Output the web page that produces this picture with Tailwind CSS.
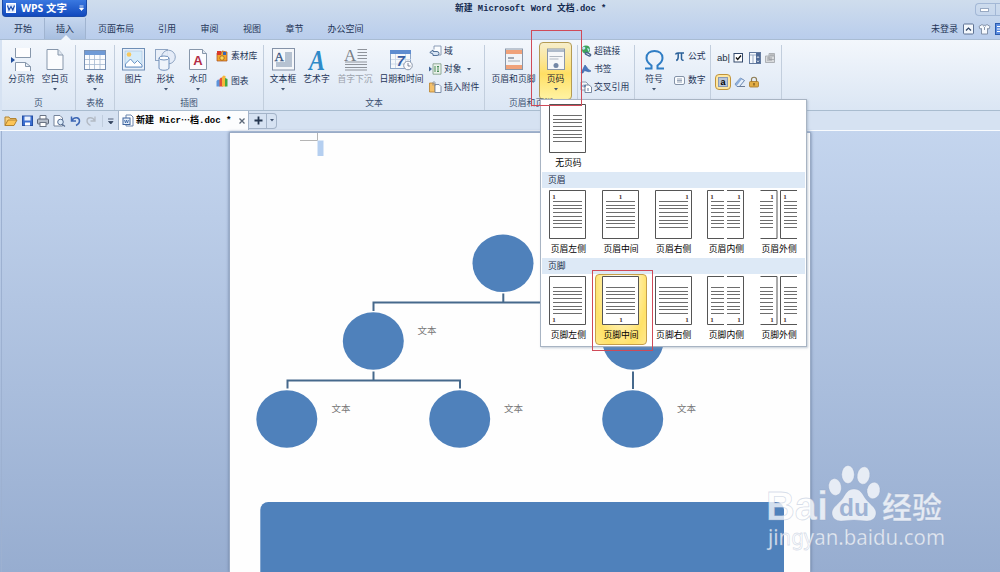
<!DOCTYPE html>
<html lang="zh-CN">

<head>
    <meta charset="UTF-8">
    <meta name="viewport" content="width=device-width, initial-scale=1.0">
    <title>WPS 文字</title>
    <script src="https://cdn.jsdelivr.net/npm/@tailwindcss/browser@4"></script>
</head>

<body class="w-[1000px] h-[572px] overflow-hidden relative flex flex-col bg-[#d6e2f2] font-['Liberation_Sans','Noto_Sans_CJK_SC',sans-serif] text-[8.8px] leading-[12px] text-[#1f3557] whitespace-nowrap">

    <!-- title bar + menu tabs -->
    <header class="h-[40px] shrink-0 flex flex-col bg-gradient-to-b from-[#cfdded] to-[#b9cdec] border-b border-[#a9bcd3]">
        <div class="h-[18px] flex justify-between">
            <div class="ml-[2px] w-[85px] h-[17px] rounded-b-sm bg-gradient-to-b from-[#3a78e0] to-[#1249bd] border border-t-0 border-[#1a4aa8] flex items-center text-white">
                <svg class="ml-[3px]" width="10" height="10" viewBox="0 0 10 10">
                    <rect x=".5" y=".5" width="9" height="9" fill="#dfeaff" stroke="#fff" />
                    <path d="M1.500 2.500l1.500 4.500 2-3.500 1.800 3.500L8.500 2.500" fill="none" stroke="#1d4eae" stroke-width="1.200" />
                </svg>
                <span class="ml-[5px] w-[58px] text-[10.4px] font-bold font-['Open_Sans','Noto_Sans_CJK_SC',sans-serif]">WPS 文字</span>
                <svg width="5" height="6" viewBox="0 0 5 6"><path d="M.5 1h4M.5 3h4L2.500 5.500z" stroke="#fff" stroke-width=".8" fill="#fff" /></svg>
            </div>
            <div class="flex w-[545px] justify-between">
                <span class="pt-[3px] text-[8.8px] font-bold text-[#13294f] font-['Liberation_Mono','Noto_Sans_CJK_SC',monospace]">新建 Microsoft Word 文档.doc *</span>
                <div class="mt-[3px] w-[25px] h-[13px] border border-r-0 border-[#a3b8d6] rounded-l-sm flex items-center justify-center">
                    <span class="w-[9px] h-[4px] border border-[#98a9c2] bg-white"></span>
                    <span class="ml-[6px] h-[11px] border-l border-[#a3b8d6]"></span>
                </div>
            </div>
        </div>
        <nav class="h-[21px] flex text-[9px] pl-[2px]">
            <span class="w-[42px] flex items-center justify-center">开始</span>
            <span class="w-[42px] flex items-center justify-center relative border-x border-[#a0b4d0] bg-gradient-to-b from-[#c5d6ee] to-[#a8bfe0]">插入
                <svg class="absolute bottom-[-1px] left-[16px]" width="10" height="5" viewBox="0 0 10 5"><path d="M0 5L5 0l5 5z" fill="#f1f6fc" /></svg>
            </span>
            <span class="w-[60px] flex items-center justify-center">页面布局</span>
            <span class="w-[42px] flex items-center justify-center">引用</span>
            <span class="w-[43px] flex items-center justify-center">审阅</span>
            <span class="w-[42px] flex items-center justify-center">视图</span>
            <span class="w-[43px] flex items-center justify-center">章节</span>
            <span class="w-[59px] flex items-center justify-center">办公空间</span>
            <span class="ml-auto flex items-center">
                <span class="w-[32px]">未登录</span>
                <svg width="37" height="12" viewBox="0 0 37 12">
                    <rect x=".5" y="1" width="10" height="10" rx="1" fill="#f3f7fc" stroke="#5f7394" />
                    <path d="M3 7.500L5.500 5 8 7.500" fill="none" stroke="#2a4062" stroke-width="1.200" />
                    <path d="M19 1.500l-3 2 1 2.500 1.500-.5v5.500h6v-5.500l1.500.5 1-2.500-3-2-1 .8h-3zM20.500 3.500l1 1 1-1M21.500 4.500v2.500" fill="#f6f9fd" stroke="#6e7f98" stroke-width=".8" />
                    <rect x="32.500" y="0.500" width="12" height="11" fill="#5b8ce0" stroke="#2c5cae" />
                    <path d="M34 3.500h4M34 6h4M34 8.500h4" stroke="#fff" />
                </svg>
            </span>
        </nav>
    </header>

    <!-- ribbon -->
    <section class="h-[71px] shrink-0 ml-[2px] flex pt-[5px] bg-gradient-to-b from-[#f3f7fc] to-[#dbe6f4] border-b border-[#a9bccf]">
        <div class="w-[74px] flex flex-col border-r border-[#c2cedd]">
            <div class="h-[52px] flex pl-[1px]">
                <div class="w-[37px] flex flex-col items-center pt-[3px]">
                    <svg width="23" height="23" viewBox="0 0 23 23">
                        <path d="M5.500 0v9.500h15V0" fill="#fdfdfe" stroke="#8797ab" />
                        <path d="M5.500 23v-8.500h10l5 4V23M15.500 14.500v4h5" fill="#fdfdfe" stroke="#8797ab" />
                        <path d="M1 9l4 3-4 3z" fill="#23509e" />
                    </svg>
                    <span class="mt-[2px]">分页符</span>
                </div>
                <div class="w-[30px] flex flex-col items-center pt-[3px]">
                    <svg width="18" height="23" viewBox="0 0 18 23">
                        <path d="M1 1.500h11l5 5.500v14.500H1z" fill="#fbfcfe" stroke="#8797ab" />
                        <path d="M12 1.500V7h5" fill="#dfe6ef" stroke="#8797ab" />
                    </svg>
                    <span class="mt-[2px]">空白页</span>
                    <svg class="mt-[3px]" width="4" height="3"><path d="M0 0h4L2 2.500z" fill="#41536f" /></svg>
                </div>
            </div>
            <span class="text-center text-[#3c5172]">页</span>
        </div>
        <div class="w-[39px] flex flex-col border-r border-[#c2cedd]">
            <div class="h-[52px] flex flex-col items-center pt-[3px]">
                <svg width="22" height="23" viewBox="0 0 22 23">
                    <rect x=".5" y="2.500" width="21" height="19" fill="#fbfcfe" stroke="#7890b3" />
                    <rect x="1" y="3" width="20" height="4" fill="#6f9ad6" />
                    <path d="M1 11.500h20M1 16.500h20M5.500 7v14M10.500 7v14M16 7v14" stroke="#a5b7d0" stroke-width=".8" />
                </svg>
                <span class="mt-[2px]">表格</span>
                <svg class="mt-[3px]" width="4" height="3"><path d="M0 0h4L2 2.500z" fill="#41536f" /></svg>
            </div>
            <span class="text-center text-[#3c5172]">表格</span>
        </div>
        <div class="w-[149px] flex flex-col border-r border-[#c2cedd]">
            <div class="h-[52px] flex pl-[3px]">
                <div class="w-[31px] flex flex-col items-center pt-[3px]">
                    <svg width="23" height="23" viewBox="0 0 23 23">
                        <rect x=".5" y=".5" width="22" height="21.500" fill="#e8f0fa" stroke="#6e8eb6" />
                        <rect x="3" y="3" width="17" height="16.500" fill="#d5ebfa" stroke="#a5bfdc" stroke-width=".6" />
                        <circle cx="7" cy="6.500" r="2.300" fill="#f8c75c" />
                        <path d="M3.500 16l5-5 4 4.500 3-3 4.500 4.500v2H3.500z" fill="#fff" stroke="#6b93c4" />
                    </svg>
                    <span class="mt-[2px]">图片</span>
                </div>
                <div class="w-[33px] flex flex-col items-center pt-[3px]">
                    <svg width="21" height="23" viewBox="0 0 21 23">
                        <rect x=".5" y="1.500" width="12" height="11" fill="#e9eff8" stroke="#8fa5c3" />
                        <circle cx="13.500" cy="9" r="6.800" fill="#e3ebf7" fill-opacity=".9" stroke="#8fa5c3" />
                        <path d="M4 10v10c0 3 10 3 10 0V10" fill="#eef3fa" stroke="#6f8fbb" />
                        <ellipse cx="9" cy="10" rx="5" ry="2" fill="#fff" stroke="#6f8fbb" />
                    </svg>
                    <span class="mt-[2px]">形状</span>
                    <svg class="mt-[3px]" width="4" height="3"><path d="M0 0h4L2 2.500z" fill="#41536f" /></svg>
                </div>
                <div class="w-[32px] flex flex-col items-center pt-[3px]">
                    <svg width="18" height="23" viewBox="0 0 18 23">
                        <path d="M.5 1.500h13l4 4v16H.5z" fill="#fbfcfe" stroke="#8797ab" />
                        <path d="M13.500 1.500v4h4" fill="#dfe6ef" stroke="#8797ab" />
                        <text x="9" y="17" text-anchor="middle" font-size="13" font-weight="bold" fill="#b32d45">A</text>
                    </svg>
                    <span class="mt-[2px]">水印</span>
                    <svg class="mt-[3px]" width="4" height="3"><path d="M0 0h4L2 2.500z" fill="#41536f" /></svg>
                </div>
                <div class="flex flex-col gap-[13px] pt-[5px] pl-[2px]">
                    <div class="flex items-center gap-[3px]">
                        <svg width="12" height="12" viewBox="0 0 12 12">
                            <path d="M1 3l4 1 1-3 5 1v9H1z" fill="#f2a52c" stroke="#a84a1c" stroke-width=".7" />
                            <rect x="1" y="1" width="4" height="4" fill="#d93a2b" />
                            <rect x="7" y="2" width="3" height="3" fill="#3565b8" />
                            <circle cx="6" cy="8" r="2.200" fill="#ffd75a" stroke="#7e4716" stroke-width=".6" />
                        </svg>
                        <span>素材库</span>
                    </div>
                    <div class="flex items-center gap-[3px]">
                        <svg width="12" height="12" viewBox="0 0 12 12">
                            <path d="M.5 6l1.500-1.500 2 .5v6.500H.5z" fill="#5b93dc" />
                            <path d="M3.500 4l1.500-1.500 2 .5v8.500H3.500z" fill="#e2523a" />
                            <path d="M6 2l1.500-1.500 2 .5v10.500H6z" fill="#f5b83a" />
                            <path d="M9 3l2.500 1v7.500H9z" fill="#46a83f" />
                        </svg>
                        <span>图表</span>
                    </div>
                </div>
            </div>
            <span class="text-center text-[#3c5172]">插图</span>
        </div>
        <div class="w-[221px] flex flex-col border-r border-[#c2cedd]">
            <div class="h-[52px] flex pl-[3px]">
                <div class="w-[32px] flex flex-col items-center pt-[3px]">
                    <svg width="23" height="23" viewBox="0 0 23 23">
                        <rect x=".5" y=".5" width="22" height="21.500" fill="#f5f7fa" stroke="#8492a8" />
                        <path d="M13 4h7v15H4v-5h9z" fill="#b6c2d1" />
                        <text x="2.500" y="12.500" font-size="13" font-family="Liberation Serif" fill="#33517c" stroke="#33517c" stroke-width=".3">A</text>
                    </svg>
                    <span class="mt-[2px]">文本框</span>
                    <svg class="mt-[3px]" width="4" height="3"><path d="M0 0h4L2 2.500z" fill="#41536f" /></svg>
                </div>
                <div class="w-[35px] flex flex-col items-center pt-[3px]">
                    <svg width="20" height="23" viewBox="0 0 20 23">
                        <text x="2" y="21.500" font-size="29" font-style="italic" font-weight="bold" font-family="Liberation Serif" textLength="16" lengthAdjust="spacingAndGlyphs" fill="#2e8ac8">A</text>
                    </svg>
                    <span class="mt-[2px]">艺术字</span>
                </div>
                <div class="w-[42px] flex flex-col items-center pt-[3px] text-[#9aa1ab]">
                    <svg width="23" height="23" viewBox="0 0 23 23">
                        <path d="M13.500 1.500H23M13.500 4.500H23M13.500 7.500H23M13.500 10.500H23M1 14h22M1 16.500h22M1 19.500h22M1 22h22" stroke="#8f949b" />
                        <text x="0" y="12.500" font-size="17" font-family="Liberation Serif" fill="#777d85">A</text>
                    </svg>
                    <span class="mt-[2px]">首字下沉</span>
                </div>
                <div class="w-[51px] flex flex-col items-center pt-[3px]">
                    <svg width="23" height="23" viewBox="0 0 23 23">
                        <rect x=".5" y="2.500" width="20" height="18" fill="#f5f8fc" stroke="#8da6c8" />
                        <rect x="0" y="2" width="21" height="4" fill="#5e8cd0" />
                        <path d="M1 11.500h20M1 16h20M5.500 6v14M15.500 6v14" stroke="#c7d3e4" stroke-width=".8" />
                        <text x="6.500" y="18" font-size="15" font-weight="bold" font-style="italic" fill="#375da2">7</text>
                        <circle cx="18" cy="17.500" r="4.300" fill="#fafbfd" stroke="#8b98ab" />
                        <path d="M18 15v3h2.500" fill="none" stroke="#5d6b80" stroke-width=".8" />
                    </svg>
                    <span class="mt-[2px]">日期和时间</span>
                </div>
                <div class="flex flex-col gap-[6px] pl-[2px]">
                    <div class="flex items-center gap-[2px]">
                        <svg width="13" height="12" viewBox="0 0 13 12">
                            <path d="M5 4.500V1h7v9H9" fill="#fafcfe" stroke="#7f92ae" stroke-width=".9" />
                            <path d="M.8 7.500L4 5v1.500h4a2 2 0 010 4H4V9z" fill="#d7e4f4" stroke="#44658f" stroke-width=".9" />
                        </svg>
                        <span>域</span>
                    </div>
                    <div class="flex items-center gap-[2px]">
                        <svg width="13" height="12" viewBox="0 0 13 12">
                            <path d="M4 .8h8v10.400H4z" fill="#eaf2ea" stroke="#7c9a83" stroke-width=".8" />
                            <path d="M6 3v6M8 3.500h2M8 8.500h2M9 3.500v5" stroke="#4b8c58" />
                            <path d="M0 3.500l3 2.500-3 2.500z" fill="#44679a" />
                        </svg>
                        <span>对象</span>
                        <svg class="ml-[3px]" width="4" height="3"><path d="M0 0h4L2 2.500z" fill="#41536f" /></svg>
                    </div>
                    <div class="flex items-center gap-[2px]">
                        <svg width="13" height="12" viewBox="0 0 13 12">
                            <path d="M.5 2h4l1.500 1.500V11H.5z" fill="#f4c069" stroke="#ba812b" stroke-width=".8" />
                            <path d="M6 3.500h4l2 2v6H6z" fill="#fafcfe" stroke="#6f83a2" stroke-width=".9" />
                            <path d="M4 4.500V1.500c0-1 2-1 2 0V5" fill="none" stroke="#7d8796" stroke-width=".8" />
                        </svg>
                        <span>插入附件</span>
                    </div>
                </div>
            </div>
            <span class="text-center text-[#3c5172]">文本</span>
        </div>
        <div class="w-[93px] flex flex-col border-r border-[#c2cedd]">
            <div class="h-[52px] flex">
                <div class="w-[54px] shrink-0 pl-[3px] flex flex-col items-center pt-[3px]">
                    <svg width="18" height="23" viewBox="0 0 18 23">
                        <rect x=".5" y="1" width="17" height="20.500" fill="#f2f4f7" stroke="#8a97a9" />
                        <rect x="1" y="2" width="16" height="4" fill="#f0a27a" />
                        <rect x="1" y="17" width="16" height="4" fill="#f0a27a" />
                        <path d="M3 10h6" stroke="#4d5c72" />
                        <path d="M3 13h12" stroke="#a4adb9" />
                    </svg>
                    <span class="mt-[2px]">页眉和页脚</span>
                </div>
                <div class="mt-[-3px] w-[33px] h-[58px] shrink-0 rounded-sm border border-[#b49b54] bg-gradient-to-b from-[#f7eecb] via-[#ffdf63] via-55% to-[#fff3a2] flex flex-col items-center pt-[5px] text-[#1b2430]">
                    <svg width="18" height="23" viewBox="0 0 18 23">
                        <rect x=".5" y="1" width="17" height="20.500" fill="#f6f7f9" stroke="#8a97a9" />
                        <path d="M1 1.500h16V4H1z" fill="#aebaca" />
                        <path d="M2.500 8.500h13M2.500 11h9" stroke="#b0b7c1" />
                        <circle cx="9" cy="17.500" r="2.500" fill="#7387a6" />
                    </svg>
                    <span class="mt-[2px]">页码</span>
                    <svg class="mt-[3px]" width="4" height="3"><path d="M0 0h4L2 2.500z" fill="#41536f" /></svg>
                </div>
            </div>
            <span class="text-center text-[#3c5172]">页眉和页脚</span>
        </div>
        <div class="w-[57px] flex flex-col gap-[6px] border-r border-[#c2cedd] pl-[2px]">
            <div class="flex items-center gap-[2px]">
                <svg width="12" height="12" viewBox="0 0 12 12">
                    <circle cx="6" cy="4.500" r="4" fill="#3fa35b" />
                    <path d="M3 2c2-1 3 1 2 2s-2 1-3 0M7 3l2.500 1-1 3" fill="#bfe3f5" />
                    <path d="M6.500 8.500l3 1.500" stroke="#48628d" stroke-width="3.500" stroke-linecap="round" />
                    <path d="M6.500 8.500l3 1.500" stroke="#dce6f4" />
                </svg>
                <span>超链接</span>
            </div>
            <div class="flex items-center gap-[2px]">
                <svg width="12" height="12" viewBox="0 0 12 12"><path d="M1 10L5 2c2 2 3 5 6 6-3 2-5-1-7 0l-1 2z" fill="#4a78c0" stroke="#31599c" stroke-width=".6" /></svg>
                <span>书签</span>
            </div>
            <div class="flex items-center gap-[2px]">
                <svg width="12" height="12" viewBox="0 0 12 12">
                    <path d="M1 1h5l2 2v6H1z" fill="#f4f7fb" stroke="#77879f" stroke-width=".8" />
                    <path d="M5 4h4l2.500 2v5.500H5z" fill="#fff" stroke="#5d6f8c" stroke-width=".8" />
                    <path d="M2 5h3.500L4 3.500M5.500 5L4 6.500M8 7v3" fill="none" stroke="#3d5e92" stroke-width=".8" />
                </svg>
                <span>交叉引用</span>
            </div>
        </div>
        <div class="w-[76px] flex border-r border-[#c2cedd] pl-[3px]">
            <div class="w-[32px] flex flex-col items-center pt-[3px]">
                <svg width="23" height="23" viewBox="0 0 23 23"><path d="M2 20.500h6.500v-3C5.500 15.500 3.500 13 3.500 10c0-4.500 3.500-7 8-7s8 2.500 8 7c0 3-2 5.500-5 7.500v3H21" fill="none" stroke="#2f7dc4" stroke-width="2" /></svg>
                <span class="mt-[2px]">符号</span>
                <svg class="mt-[3px]" width="4" height="3"><path d="M0 0h4L2 2.500z" fill="#41536f" /></svg>
            </div>
            <div class="flex flex-col gap-[12px] pt-[5px] pl-[4px]">
                <div class="flex items-center gap-[3px]">
                    <svg width="11" height="11" viewBox="0 0 11 11"><path d="M1.500 3.500C2 2 3 2 4 2h6M4.200 2v4c0 2-.5 3-2 3.500M7.500 2v5.500c0 1.500 1 2 2 1.500" fill="none" stroke="#2a6099" stroke-width="1.500" /></svg>
                    <span>公式</span>
                </div>
                <div class="flex items-center gap-[3px]">
                    <svg width="11" height="11" viewBox="0 0 11 11">
                        <rect x=".5" y="1.500" width="10" height="8" rx="1.500" fill="#fafcfe" stroke="#8493a8" />
                        <path d="M3 4h5M3 5.500h5M3 7h5" stroke="#6d7f9a" stroke-width=".7" />
                    </svg>
                    <span>数字</span>
                </div>
            </div>
        </div>
        <div class="w-[71px] flex flex-col border-r border-[#c2cedd] pl-[4px] pt-[5px]">
            <div class="h-[16px] flex items-center">
                <span class="w-[18px] shrink-0 pl-[2px] text-[9.5px] text-[#222f42]">ab|</span>
                <svg class="shrink-0" width="42" height="14" viewBox="0 0 42 14">
                    <rect x="1" y="2.500" width="8.500" height="8.500" fill="#fff" stroke="#33496b" />
                    <path d="M3 6.500l1.700 2L8 4.500" fill="none" stroke="#111" stroke-width="1.300" />
                    <rect x="16.500" y="1.500" width="11" height="11" fill="#f6f9fd" stroke="#647b9f" />
                    <path d="M17 4h6M20 4v8" stroke="#9aabc4" />
                    <path d="M23 2h4v10h-4z" fill="#4f6a96" />
                    <path d="M24 7l1-1.500L26 7M24 9.500l1 1.500 1-1.500" fill="none" stroke="#fff" stroke-width=".7" />
                    <path d="M32.500 5h9v6.500h-9zM36 2.500h5.500v6h-5.500z" fill="#d9dbdd" stroke="#a0a3a8" stroke-width=".8" />
                    <path d="M34 7h5M34 9h5M37 4h4" stroke="#8f9297" stroke-width=".8" />
                </svg>
            </div>
            <div class="mt-[8px] h-[16px] flex items-center">
                <span class="w-[16px] h-[16px] shrink-0 rounded-sm border border-[#c0933a] bg-[#ffe7a0] flex items-center justify-center">
                    <span class="w-[10px] h-[10px] border border-[#8899b5] bg-[#b8c5dc] flex items-center justify-center text-[9px] leading-[8px] font-bold text-black">a</span>
                </span>
                <svg class="ml-[3px]" width="12" height="12" viewBox="0 0 12 12">
                    <path d="M1 8l5.500-6 4 2.500L5.500 10.500H3z" fill="#e6effa" stroke="#5b7ba8" stroke-width=".9" />
                    <path d="M1 8l5.500-6 1.500 1L3 9.500z" fill="#8fb0dc" />
                    <path d="M5 10.500h6" stroke="#6c7c95" />
                </svg>
                <svg class="ml-[3px]" width="10" height="12" viewBox="0 0 10 12">
                    <path d="M2.500 6V3.500c0-3 5-3 5 0V6" fill="none" stroke="#8e7d54" stroke-width="1.200" />
                    <rect x=".5" y="5.500" width="9" height="5.500" rx="1" fill="#e2ad45" stroke="#a5762a" stroke-width=".8" />
                    <path d="M5 7v2.500" stroke="#5d3d10" />
                </svg>
            </div>
        </div>
    </section>

    <!-- quick access + document tabs -->
    <section class="h-[19px] shrink-0 ml-[2px] flex items-center">
        <svg class="ml-[2px] shrink-0" width="112" height="14" viewBox="0 0 112 14">
            <path d="M1 11.500V3h4l1 1.500h6V6" fill="#f7d080" stroke="#b48430" />
            <path d="M1 11.500L4 6h9l-3 5.500z" fill="#fcc558" stroke="#b48430" />
            <rect x="18.500" y="2" width="10" height="9.500" fill="#3c6fd0" stroke="#2450a5" />
            <rect x="20.500" y="2.500" width="6" height="4" fill="#e9f1fd" />
            <rect x="21" y="8.500" width="5" height="3" fill="#fff" />
            <path d="M36 5V1.500h6V5" fill="#fff" stroke="#6a7485" />
            <rect x="33.500" y="5" width="11" height="5" rx="1" fill="#b5bdc9" stroke="#5d6778" />
            <rect x="36" y="8.500" width="6" height="4" fill="#fff" stroke="#6a7485" />
            <path d="M50 1.500h6l2.500 2.500v8H50z" fill="#fff" stroke="#75839a" />
            <circle cx="56.500" cy="8" r="2.800" fill="#dcebfa" stroke="#566e93" />
            <path d="M58.500 10.500l2.500 2" stroke="#566e93" stroke-width="1.300" />
            <path d="M67.500 2.500V7H72M68 6.500c2-4 7.500-3.500 7.500.5 0 2-1.500 3.500-3.500 4.500" fill="none" stroke="#3c66b4" stroke-width="1.500" />
            <path d="M91 2.500V7h-4.500M90.500 6.500c-2-4-7.500-3.500-7.500.5 0 2 1.500 3.500 3.500 4.500" fill="none" stroke="#b3bac4" stroke-width="1.300" />
            <path d="M98.500 1v12" stroke="#c0cddd" />
            <path d="M104 5h5.500M104.500 7.500h4.500L106.800 10z" fill="#33435d" stroke="#33435d" stroke-width=".8" />
        </svg>
        <div class="ml-[2px] w-[131px] h-[19px] flex items-center border-x border-[#a4b4c9] bg-[#fcfdfe] text-black">
            <svg class="ml-[3px] shrink-0" width="12" height="13" viewBox="0 0 12 13">
                <path d="M4 1h5l2 2v9H4z" fill="#fff" stroke="#6a85ad" />
                <rect x="1" y="4" width="7" height="6.500" fill="#e7f0fb" stroke="#3f659e" />
                <path d="M2.500 6l1 3 1-3 1 3 1-3" fill="none" stroke="#355f9f" stroke-width=".8" />
            </svg>
            <span class="ml-[2px] w-[103px] shrink-0 text-[9px] font-bold font-['Liberation_Mono','Noto_Sans_CJK_SC',monospace]">新建 Micr<span class="font-['Noto_Sans_CJK_SC']">…</span>档.doc *</span>
            <svg class="shrink-0" width="6" height="6" viewBox="0 0 6 6"><path d="M.5.500l5 5M5.500.500l-5 5" stroke="#5d6979" stroke-width="1.300" /></svg>
        </div>
        <div class="w-[28px] h-[16px] flex items-center border border-l-0 border-[#a4b4c9] rounded-r-sm">
            <svg class="ml-[5px]" width="9" height="9" viewBox="0 0 9 9"><path d="M4.500.500v8M.5 4.500h8" stroke="#24364f" stroke-width="1.800" /></svg>
            <span class="ml-[3px] h-[14px] border-l border-[#a4b4c9]"></span>
            <svg class="ml-[3px]" width="4" height="3"><path d="M0 0h4L2 2.500z" fill="#41536f" /></svg>
        </div>
    </section>

    <!-- document area -->
    <main class="h-[442px] shrink-0 flex justify-start border-t border-[#f8fbfe] bg-gradient-to-b from-[#c4d5ee] to-[#97add0]">
        <div class="w-[2px] border-r border-[#9db1d1]"></div>
        <div class="ml-[227px] mt-[1px] w-[582px] bg-[#fefefe] border-t border-x border-[#9aabc6] shadow-[0_0_3px_#6b7f9f]">
            <svg width="580" height="440" viewBox="230 133 580 440">
                <path d="M300 140.500h17.500V132" fill="none" stroke="#b5b5b5" />
                <rect x="317.500" y="140.500" width="6" height="15.500" fill="#b5cff0" />
                <g fill="none" stroke="#46698c" stroke-width="2">
                    <path d="M503.300 293.500V302M373.500 311v-8.500H633V311" />
                    <path d="M373.500 371.500v9M287.500 388.500v-8h172.500v8" />
                    <path d="M633 371.500V389" />
                </g>
                <g fill="#4f81bb">
                    <ellipse cx="503" cy="263.300" rx="30.500" ry="28.800" />
                    <ellipse cx="373.300" cy="341" rx="30.500" ry="28.800" />
                    <ellipse cx="633" cy="341" rx="30.500" ry="28.800" />
                    <ellipse cx="286.800" cy="419" rx="30.500" ry="28.800" />
                    <ellipse cx="459.700" cy="419" rx="30.500" ry="28.800" />
                    <ellipse cx="632.700" cy="419" rx="30.500" ry="28.800" />
                    <rect x="260.300" y="502" width="523.700" height="90" rx="8" />
                </g>
                <g font-size="9.5" fill="#777">
                    <text x="417.500" y="334">文本</text>
                    <text x="331.500" y="412">文本</text>
                    <text x="504" y="412">文本</text>
                    <text x="677" y="412">文本</text>
                </g>
            </svg>
        </div>
    </main>

    <!-- page number gallery -->
    <div class="absolute left-[540px] top-[99px] w-[267px] h-[248px] bg-white border border-[#a8b4c3] shadow-[1px_1px_2px_#8c9bb080] text-black flex flex-col px-[1px]">
        <div id="noneRow" class="h-[72px] flex pt-[2px]"></div>
        <div class="h-[16px] shrink-0 bg-[#dde9f6] flex items-center pl-[6px] text-[#1b2c48]">页眉</div>
        <div id="headerRow" class="h-[70px] flex"></div>
        <div class="h-[16px] shrink-0 bg-[#dde9f6] flex items-center pl-[6px] text-[#1b2c48]">页脚</div>
        <div id="footerRow" class="h-[71px] flex"></div>
    </div>

    <!-- highlight frames -->
    <div class="absolute left-[531px] top-[30px] w-[51px] h-[76px] border border-[#cf4a58]"></div>
    <div class="absolute left-[592px] top-[270px] w-[61px] h-[81px] border border-[#cf4a58]"></div>

    <!-- watermark -->
    <svg class="absolute left-[760px] top-[460px]" width="200" height="95" viewBox="760 460 200 95">
        <g fill="#fff" fill-opacity=".75" stroke="#8ea2c4" stroke-opacity=".35" stroke-width=".8">
            <text x="766" y="520" font-size="40" font-weight="bold" textLength="62" lengthAdjust="spacingAndGlyphs">Bai</text>
            <ellipse cx="835" cy="487" rx="6.300" ry="8.500" transform="rotate(-10 835 487)" />
            <ellipse cx="848" cy="474.500" rx="6.300" ry="9" />
            <ellipse cx="863.500" cy="475.500" rx="6.300" ry="8.800" transform="rotate(10 863.500 475.500)" />
            <ellipse cx="873.500" cy="490.500" rx="6.500" ry="8.300" transform="rotate(10 873.500 490.500)" />
            <path d="M854 489c6 0 8 4 11 9 4 6 11 9 11 15 0 5-4 8-9 8-5 0-8-1-13-1s-8 1-13 1c-5 0-9-3-9-8 0-6 7-9 11-15 3-5 5-9 11-9z" />
            <text x="882" y="517.500" font-size="30" font-weight="bold" font-family="Noto Sans CJK SC">经验</text>
            <text x="768" y="545" font-size="22" font-family="Noto Sans" textLength="177" lengthAdjust="spacingAndGlyphs">jingyan.baidu.com</text>
        </g>
        <text x="839" y="516" font-size="24" font-weight="bold" fill="#9fb3d4" textLength="30" lengthAdjust="spacingAndGlyphs">du</text>
    </svg>

    <script>
        // page outline and the x ranges of its text lines, in a 38x50 box
        const shapes = {
            full: { box: 'M.5.500h36v48h-36z', lines: [[4, 33]] },
            inner: { box: 'M17 .5H.5v48H17M20 .5h16.500v48H20', lines: [[4, 17], [20, 33]] },
            outer: { box: 'M.5.500h16.500v48H.5M37 .5H20.500v48H37', lines: [[0, 13], [24, 37]] }
        };

        function thumb(shape, digits, atBottom) {
            const s = shapes[shape];
            let d = '';
            for (let i = 0; i < 8; i++) {
                const y = 11.5 + Math.round(i * 3.7);
                s.lines.forEach(([a, b]) => d += `M${a} ${y}h${b - a}`);
            }
            const nums = digits.map(x => `<text x="${x}" y="${atBottom ? 45.5 : 8.5}" font-size="7" font-family="Liberation Serif" font-weight="bold" fill="#4a3030" text-anchor="middle">1</text>`).join('');
            return `<svg class="shrink-0" width="38" height="50" viewBox="0 0 38 50"><path d="${s.box}" fill="#fff" stroke="#555" /><path d="${d}" stroke="#6d6d6d" />${nums}</svg>`;
        }

        function cell(item, atBottom) {
            const [label, shape, digits, active] = item;
            const look = active
                ? 'border-[#c59f4b] bg-[radial-gradient(ellipse_at_50%_10%,#fffbe8_20%,#ffe268_75%,#ffe88c)]'
                : 'border-transparent';
            return `<div class="w-[52.7px] h-full shrink-0 rounded-sm border ${look} flex flex-col items-center pt-[1px]">${thumb(shape, digits, atBottom)}<span class="mt-[3px]">${label}</span></div>`;
        }

        const none = [['无页码', 'full', []]];
        const headers = [
            ['页眉左侧', 'full', [5]],
            ['页眉中间', 'full', [18.5]],
            ['页眉右侧', 'full', [32]],
            ['页眉内侧', 'inner', [5, 32]],
            ['页眉外侧', 'outer', [12, 25]]
        ];
        const footers = [
            ['页脚左侧', 'full', [5]],
            ['页脚中间', 'full', [19], true],
            ['页脚右侧', 'full', [32]],
            ['页脚内侧', 'inner', [5, 32]],
            ['页脚外侧', 'outer', [12, 25]]
        ];

        document.getElementById('noneRow').innerHTML = none.map(i => cell(i, false)).join('');
        document.getElementById('headerRow').innerHTML = headers.map(i => cell(i, false)).join('');
        document.getElementById('footerRow').innerHTML = footers.map(i => cell(i, true)).join('');
    </script>
</body>

</html>
